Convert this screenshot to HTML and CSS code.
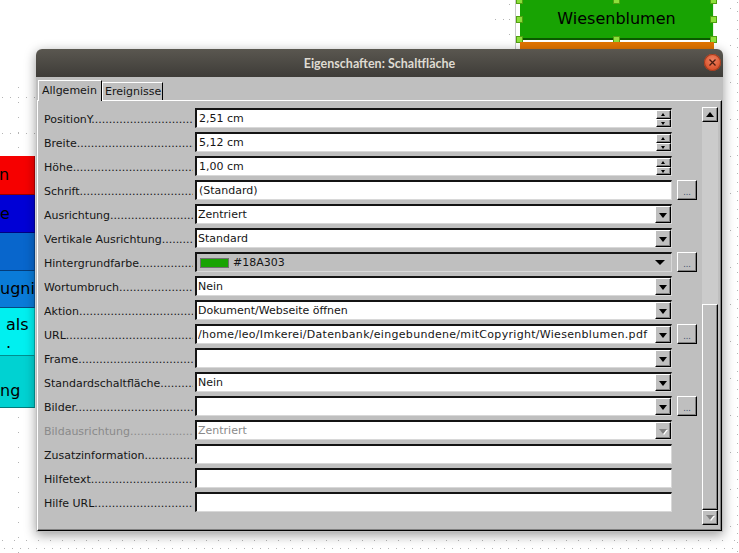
FILE: index.html
```html
<!DOCTYPE html>
<html lang="de">
<head>
  <meta charset="UTF-8">
  <title>Eigenschaften: Schaltfläche</title>
  <link rel="stylesheet" href="styles.css">
</head>
<body>
  <div class="canvas">
    <!-- grid dots of the drawing page -->
    <div class="dots-h grid-a"></div>
    <div class="dots-h grid-b"></div>
    <div class="dots-v grid-c"></div>
    <div class="dots-v grid-d"></div>
    <div class="dots-h grid-e"></div>
    <div class="dots-h grid-f"></div>
    <div class="dots-v grid-g"></div>
    <div class="dots-v grid-h"></div>
    <div class="dots-h grid-i"></div>
    <div class="dots-v grid-j"></div>
    <div class="page-edge"></div>

    <!-- buttons on the form, cut by the window edge -->
    <div class="shapes">
      <div class="shape red"><span class="t-n">n</span></div>
      <div class="shape blue"><span class="t-e">e</span></div>
      <div class="shape mid"></div>
      <div class="shape sky"><span>ugni</span></div>
      <div class="shape cyan"><span class="t-als">als<br>.</span></div>
      <div class="shape teal"><span class="t-ng"><br>ng</span></div>
    </div>

    <div class="meadow">
      Wiesenblumen
      <i class="handle h-tl"></i><i class="handle h-tc"></i><i class="handle h-tr"></i>
      <i class="handle h-ml"></i><i class="handle h-mr"></i>
      <i class="handle h-bl"></i><i class="handle h-bc"></i><i class="handle h-br"></i>
    </div>
    <div class="orange"></div>

    <div class="dialog">
      <div class="titlebar">
        <span class="title">Eigenschaften: Schaltfläche</span>
        <span class="close">
          <svg width="17" height="17" viewBox="0 0 17 17">
            <path d="M5.5 5.5 L11.5 11.5 M11.5 5.5 L5.5 11.5" stroke="#4a1c10" stroke-width="1.3" fill="none"/>
          </svg>
        </span>
      </div>

      <div class="body">
        <div class="tabs">
          <div class="tab active">Allgemein</div>
          <div class="tab">Ereignisse</div>
        </div>

        <div class="panel">
          <div class="rows">
            <div class="row">
              <span class="label">PositionY</span>
              <div class="field"><span class="value">2,51 cm</span><span class="spin"><i class="up"></i><i class="down"></i></span></div>
            </div>
            <div class="row">
              <span class="label">Breite</span>
              <div class="field"><span class="value">5,12 cm</span><span class="spin"><i class="up"></i><i class="down"></i></span></div>
            </div>
            <div class="row">
              <span class="label">Höhe</span>
              <div class="field"><span class="value">1,00 cm</span><span class="spin"><i class="up"></i><i class="down"></i></span></div>
            </div>
            <div class="row">
              <span class="label">Schrift</span>
              <div class="field"><span class="value">(Standard)</span></div>
              <button class="more">...</button>
            </div>
            <div class="row">
              <span class="label">Ausrichtung</span>
              <div class="field list"><span class="value">Zentriert</span><span class="drop"></span></div>
            </div>
            <div class="row">
              <span class="label">Vertikale Ausrichtung</span>
              <div class="field list"><span class="value">Standard</span><span class="drop"></span></div>
            </div>
            <div class="row">
              <span class="label">Hintergrundfarbe</span>
              <div class="field color"><span class="swatch"></span><span class="value">#18A303</span><span class="arrow"></span></div>
              <button class="more">...</button>
            </div>
            <div class="row">
              <span class="label">Wortumbruch</span>
              <div class="field list"><span class="value">Nein</span><span class="drop"></span></div>
            </div>
            <div class="row">
              <span class="label">Aktion</span>
              <div class="field list"><span class="value">Dokument/Webseite öffnen</span><span class="drop"></span></div>
            </div>
            <div class="row">
              <span class="label">URL</span>
              <div class="field list"><span class="value url">/home/leo/Imkerei/Datenbank/eingebundene/mitCopyright/Wiesenblumen.pdf</span><span class="drop"></span></div>
              <button class="more">...</button>
            </div>
            <div class="row">
              <span class="label">Frame</span>
              <div class="field list"><span class="value"></span><span class="drop"></span></div>
            </div>
            <div class="row">
              <span class="label">Standardschaltfläche</span>
              <div class="field list"><span class="value">Nein</span><span class="drop"></span></div>
            </div>
            <div class="row">
              <span class="label">Bilder</span>
              <div class="field list"><span class="value"></span><span class="drop"></span></div>
              <button class="more">...</button>
            </div>
            <div class="row disabled">
              <span class="label">Bildausrichtung</span>
              <div class="field list"><span class="value">Zentriert</span><span class="drop"></span></div>
            </div>
            <div class="row">
              <span class="label">Zusatzinformation</span>
              <div class="field"></div>
            </div>
            <div class="row">
              <span class="label">Hilfetext</span>
              <div class="field"></div>
            </div>
            <div class="row">
              <span class="label">Hilfe URL</span>
              <div class="field"></div>
            </div>
          </div>

          <div class="scrollbar">
            <span class="sb-btn sb-up"></span>
            <span class="sb-track"></span>
            <span class="sb-thumb"></span>
            <span class="sb-btn sb-down"></span>
          </div>
        </div>
      </div>
    </div>
  </div>
</body>
</html>
```

FILE: styles.css
```css
* {
  box-sizing: border-box;
}

body {
  margin: 0;
  font-family: "DejaVu Sans", sans-serif;
  font-size: 11px;
  color: #151515;
}

.canvas {
  position: relative;
  width: 739px;
  height: 553px;
  overflow: hidden;
  background: #fff;
}

/* page grid */
.dots-h,
.dots-v {
  position: absolute;
}

.dots-h {
  height: 1px;
  background: repeating-linear-gradient(to right, #b4b4b4 0 1px, transparent 1px 8px);
}

.dots-v {
  width: 1px;
  background: repeating-linear-gradient(to bottom, #b4b4b4 0 1px, transparent 1px 15px);
}

.grid-a { left: 2px; top: 97px; width: 34px; }
.grid-b { left: 2px; top: 133px; width: 34px; }
.grid-c { left: 18px; top: 87px; height: 70px; }
.grid-d { left: 18px; top: 417px; height: 136px; }
.grid-e { left: 2px; top: 540px; width: 737px; background: repeating-linear-gradient(to right, #b4b4b4 0 1px, transparent 1px 12px); }
.grid-f { left: 4px; top: 548px; width: 737px; }
.grid-g { left: 730px; top: 8px; height: 545px; background: repeating-linear-gradient(to bottom, #b4b4b4 0 1px, transparent 1px 37px); }
.grid-h { left: 737px; top: 2px; height: 551px; background: repeating-linear-gradient(to bottom, #b4b4b4 0 1px, transparent 1px 9px); }
.grid-i { left: 495px; top: 19px; width: 16px; }
.grid-j { left: 509px; top: 4px; height: 45px; }

.page-edge {
  position: absolute;
  left: 515px;
  top: 0;
  width: 1px;
  height: 50px;
  background: #c9c9c9;
}

/* form buttons at the left edge */
.shapes {
  position: absolute;
  left: 0;
  top: 156px;
  width: 35px;
  font-size: 16px;
  color: #000;
}

.shape {
  display: flex;
  align-items: center;
  overflow: hidden;
  white-space: nowrap;
  line-height: 18px;
  border-right: 1px solid rgba(0, 0, 0, 0.25);
  border-bottom: 1px solid rgba(0, 0, 0, 0.4);
}

.red { height: 39px; background: #f60000; }
.blue { height: 38px; background: #0000d6; }
.mid { height: 38px; background: #0866cc; }
.sky { height: 37px; background: #0a7bd8; }
.cyan { height: 48px; background: #00f0f0; }
.teal { height: 52px; background: #00d2d2; }

.t-n { margin-left: -1px; }
.t-als { margin-left: 6px; margin-top: 4px; }
.t-ng { margin-top: 0; }

/* selected button on the form */
.meadow {
  position: absolute;
  left: 520px;
  top: -1px;
  width: 194px;
  height: 41px;
  display: flex;
  align-items: center;
  justify-content: center;
  background: #18a303;
  border-bottom: 2px solid #0b5a00;
  border-right: 1px solid #e8f4e0;
  font-size: 16px;
  color: #000;
}

.handle {
  position: absolute;
  width: 7px;
  height: 7px;
  background: #8de03c;
  border: 1px solid #52a012;
}

.h-tl { left: -4px; top: -2px; }
.h-tc { left: 93px; top: -2px; }
.h-tr { right: -4px; top: -2px; }
.h-ml { left: -4px; top: 17px; }
.h-mr { right: -4px; top: 17px; }
.h-bl { left: -4px; bottom: -5px; }
.h-bc { left: 93px; bottom: -5px; }
.h-br { right: -4px; bottom: -5px; }

.orange {
  position: absolute;
  left: 520px;
  top: 42px;
  width: 194px;
  height: 10px;
  background: #e27400;
}

/* dialog window */
.dialog {
  position: absolute;
  left: 36px;
  top: 49px;
  width: 687px;
  height: 483px;
  display: flex;
  flex-direction: column;
  border-radius: 6px 6px 0 0;
  box-shadow: 0 3px 12px rgba(0, 0, 0, 0.4);
}

.titlebar {
  position: relative;
  height: 28px;
  display: flex;
  align-items: center;
  justify-content: center;
  background: linear-gradient(#5a5750, #3e3c38);
  border-radius: 6px 6px 0 0;
}

.title {
  font-family: "Lato", sans-serif;
  font-weight: bold;
  font-size: 12.5px;
  color: #dfdbd2;
}

.close {
  position: absolute;
  right: 2px;
  top: 5px;
  width: 17px;
  height: 17px;
  border-radius: 50%;
  background: radial-gradient(circle at 50% 35%, #f08462, #d9512b 70%);
  box-shadow: inset 0 0 0 1px #a23c1e;
}

.close svg {
  display: block;
}

.body {
  flex: 1;
  display: flex;
  flex-direction: column;
  background: #bfbfbf;
}

.tabs {
  display: flex;
  align-items: flex-end;
  height: 23px;
  padding-left: 2px;
}

.tab {
  height: 18px;
  width: 61px;
  padding-left: 2px;
  line-height: 17px;
  border-top: 1px solid #fff;
  border-left: 1px solid #fff;
  border-right: 1px solid #000;
}

.tab.active {
  position: relative;
  height: 21px;
  width: 64px;
  padding-left: 3px;
  margin-bottom: -1px;
  line-height: 19px;
  background: #bfbfbf;
  z-index: 1;
}

.panel {
  flex: 1;
  display: flex;
  margin: 0 1px 1px 1px;
  border-top: 1px solid #fff;
  border-left: 1px solid #fff;
  border-right: 1px solid #000;
  border-bottom: 1px solid #000;
  box-shadow: inset -1px -1px 0 #808080;
}

.rows {
  display: flex;
  flex-direction: column;
  gap: 4px;
  padding: 7px 0 0 6px;
}

.row {
  display: flex;
  align-items: center;
  height: 20px;
}

.label {
  width: 149px;
  margin-right: 2px;
  padding-top: 2px;
  overflow: hidden;
  white-space: nowrap;
}

.label::after {
  content: "................................................................................";
}

.disabled .label,
.disabled .value {
  color: #8a8a8a;
}

.field {
  display: flex;
  align-items: center;
  width: 477px;
  height: 20px;
  padding-left: 2px;
  background: #fff;
  border-top: 2px solid #141414;
  border-left: 2px solid #141414;
  border-bottom: 1px solid #d8d8d8;
  border-right: 1px solid #d8d8d8;
  white-space: nowrap;
  overflow: hidden;
}

.field.list {
  padding-left: 1px;
}

.value {
  flex: 1;
  overflow: hidden;
}

.value.url {
  letter-spacing: 0.3px;
}

/* raised 3d look shared by the small buttons */
.spin i,
.drop,
.more,
.sb-btn,
.sb-thumb {
  background: #bfbfbf;
  border-top: 1px solid #fff;
  border-left: 1px solid #fff;
  border-right: 1px solid #000;
  border-bottom: 1px solid #000;
  box-shadow: inset -1px -1px 0 #808080;
}

.spin {
  display: flex;
  flex-direction: column;
  width: 15px;
  height: 17px;
}

.spin i {
  position: relative;
  flex: 1;
}

.spin i::after {
  content: "";
  position: absolute;
  left: 4px;
  border-left: 2.5px solid transparent;
  border-right: 2.5px solid transparent;
}

.spin .up::after {
  top: 2px;
  border-bottom: 3px solid #000;
}

.spin .down::after {
  top: 2px;
  border-top: 3px solid #000;
}

.drop {
  position: relative;
  width: 16px;
  height: 17px;
}

.drop::after {
  content: "";
  position: absolute;
  left: 3px;
  top: 6px;
  border-left: 4.5px solid transparent;
  border-right: 4.5px solid transparent;
  border-top: 5px solid #000;
}

.disabled .drop::after {
  border-top-color: #808080;
  filter: drop-shadow(1px 1px 0 #fff);
}

.field.color {
  background: #bfbfbf;
  padding-left: 3px;
}

.swatch {
  width: 29px;
  height: 10px;
  margin-right: 4px;
  background: #18a303;
  border: 1px solid #707070;
}

.arrow {
  width: 0;
  height: 0;
  margin-right: 6px;
  border-left: 5px solid transparent;
  border-right: 5px solid transparent;
  border-top: 5px solid #000;
}

.more {
  width: 20px;
  height: 20px;
  margin-left: 5px;
  padding: 0 0 2px 0;
  font-family: "DejaVu Sans", sans-serif;
  font-size: 8px;
  line-height: 8px;
  color: #3a4a6a;
  display: flex;
  align-items: flex-end;
  justify-content: center;
}

/* vertical scrollbar of the panel */
.scrollbar {
  display: flex;
  flex-direction: column;
  width: 16px;
  height: 418px;
  margin: 6px 0 0 auto;
  margin-right: 3px;
  background: #cbcbcb;
}

.sb-btn {
  position: relative;
  height: 15px;
}

.sb-up::after,
.sb-down::after {
  content: "";
  position: absolute;
  left: 3px;
  top: 4px;
  border-left: 4px solid transparent;
  border-right: 4px solid transparent;
}

.sb-up::after {
  border-bottom: 5px solid #000;
}

.sb-down::after {
  border-top: 5px solid #808080;
  filter: drop-shadow(1px 1px 0 #fff);
}

.sb-track {
  flex: 1;
}

.sb-thumb {
  height: 206px;
}
```
